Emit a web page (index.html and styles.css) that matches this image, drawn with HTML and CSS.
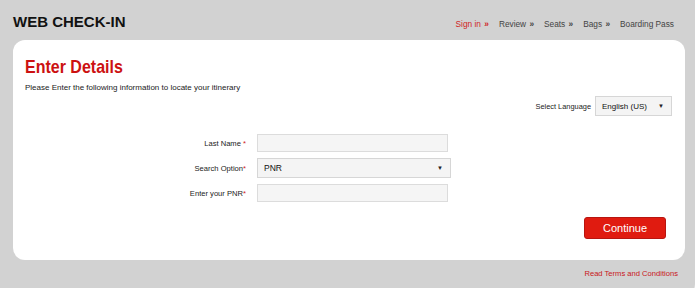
FILE: index.html
```html
<!DOCTYPE html>
<html lang="en">
<head>
<meta charset="UTF-8" />
<meta name="viewport" content="width=device-width, initial-scale=1" />
<title>Web Check-in</title>
<link rel="stylesheet" href="styles.css">
</head>
<body>
<div class="page">
  <div class="topbar">
    <h1>WEB CHECK-IN</h1>
    <ul class="steps">
      <li class="active">Sign in <span class="arr">»</span></li>
      <li>Review <span class="arr">»</span></li>
      <li>Seats <span class="arr">»</span></li>
      <li>Bags <span class="arr">»</span></li>
      <li>Boarding Pass</li>
    </ul>
  </div>

  <div class="card">
    <h2>Enter Details</h2>
    <p class="intro">Please Enter the following information to locate your itinerary</p>

    <div class="lang">
      <label>Select Language</label>
      <div class="select lang-select">English (US) <span class="caret">▼</span></div>
    </div>

    <div class="form">
      <label>Last Name <span class="req">*</span></label>
      <input type="text" />
      <label>Search Option<span class="req">*</span></label>
      <div class="select wide">PNR <span class="caret">▼</span></div>
      <label>Enter your PNR<span class="req">*</span></label>
      <input type="text" />
    </div>

    <div class="actions">
      <button class="continue">Continue</button>
    </div>
  </div>

  <div class="footer">
    <a href="#">Read Terms and Conditions</a>
  </div>
</div>
</body>
</html>
```

FILE: styles.css
```css
body {
  margin: 0;
  background: #fff;
  font-family: 'Liberation Sans', Arial, sans-serif;
  color: #333;
}
.page {
  width: 695px;
  height: 298px;
  background: #d2d2d2;
  border-bottom-right-radius: 14px;
}
.topbar {
  height: 40px;
  display: flex;
  justify-content: space-between;
  align-items: center;
  padding: 0 21px 0 13px;
  box-sizing: border-box;
}
.topbar h1 {
  margin: 2px 0 0;
  font-size: 15px;
  font-weight: bold;
  color: #111;
}
.steps {
  list-style: none;
  margin: 8px 0 0;
  padding: 0;
  display: flex;
  gap: 10px;
  font-size: 8.3px;
  color: #444;
}
.steps .arr {
  font-weight: bold;
  margin-left: 1px;
}
.steps .active {
  color: #d01f1f;
}
.card {
  margin-left: 13px;
  width: 672px;
  height: 220px;
  background: #fff;
  border-radius: 12px;
  padding: 16px 13px 0 12px;
  box-sizing: border-box;
}
.card h2 {
  margin: 0;
  font-size: 16px;
  font-weight: bold;
  color: #cc1111;
  transform: scaleY(1.2);
  transform-origin: left top;
}
.intro {
  margin: 9px 0 0;
  font-size: 8px;
  color: #222;
}
.lang {
  display: flex;
  justify-content: flex-end;
  align-items: center;
  gap: 4px;
  margin-top: 4px;
  font-size: 7.4px;
  color: #222;
}
.select {
  position: relative;
  box-sizing: border-box;
  background: #f4f4f4;
  border: 1px solid #d6d6d6;
  color: #111;
  display: flex;
  align-items: center;
  padding-left: 6px;
}
.caret {
  position: absolute;
  right: 7px;
  font-size: 6px;
  color: #222;
}
.lang-select {
  width: 77px;
  height: 20px;
  font-size: 8px;
}
.form {
  display: grid;
  grid-template-columns: 221px 194px;
  column-gap: 11px;
  row-gap: 6px;
  margin-top: 18px;
  align-items: center;
  font-size: 7.6px;
}
.form label {
  text-align: right;
  color: #222;
}
.req {
  color: #d01f1f;
}
.form input {
  width: 191px;
  height: 18px;
  box-sizing: border-box;
  border: 1px solid #dcdcdc;
  background: #f5f5f5;
  margin: 0;
}
.select.wide {
  width: 194px;
  height: 20px;
  font-size: 8.5px;
}
.actions {
  display: flex;
  justify-content: flex-end;
  margin-top: 15px;
  padding-right: 6px;
}
.continue {
  width: 82px;
  height: 22px;
  background: #e01b10;
  border: 1px solid #b81510;
  border-radius: 3px;
  color: #fff;
  font-family: 'Liberation Sans', Arial, sans-serif;
  font-size: 11px;
  cursor: pointer;
}
.footer {
  display: flex;
  justify-content: flex-end;
  padding: 9px 17px 0 0;
}
.footer a {
  color: #c8161a;
  font-size: 7.6px;
  text-decoration: none;
}
```
